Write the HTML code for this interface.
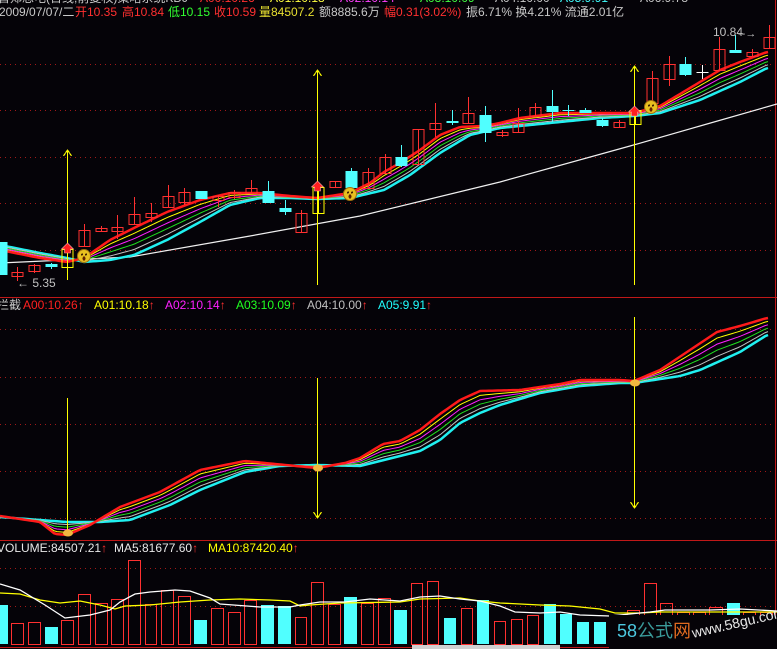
<!DOCTYPE html>
<html><head><meta charset="utf-8">
<style>
html,body{margin:0;padding:0;background:#050308;width:777px;height:649px;overflow:hidden}
#wrap{position:relative;width:777px;height:649px;font-family:"Liberation Sans","Noto Sans CJK SC",sans-serif}
.t{position:absolute;font-size:12px;white-space:nowrap;line-height:14px}
svg{position:absolute;left:0;top:0}
</style></head><body><div id="wrap">
<svg id="s" width="777" height="649" viewBox="0 0 777 649" shape-rendering="crispEdges"></svg>

<div class="t" style="left:-2px;top:-9px;color:#c8c8c8">首郑忠电(日线,前复权)策略系统KDJ</div>
<div class="t" style="left:200px;top:-9px;color:#ff3030">A00:10.26</div>
<div class="t" style="left:270px;top:-9px;color:#ffff40">A01:10.18</div>
<div class="t" style="left:340px;top:-9px;color:#ff40ff">A02:10.14</div>
<div class="t" style="left:420px;top:-9px;color:#40ff40">A03:10.09</div>
<div class="t" style="left:495px;top:-9px;color:#c8c8c8">A04:10.00</div>
<div class="t" style="left:560px;top:-9px;color:#40ffff">A05:9.91</div>
<div class="t" style="left:640px;top:-9px;color:#c8c8c8">A06:9.78</div>

<div class="t" style="left:-1px;top:5px;color:#c8c8c8">2009/07/07/二</div>
<div class="t" style="left:75px;top:5px;color:#ff3030">开10.35</div>
<div class="t" style="left:122px;top:5px;color:#ff3030">高10.84</div>
<div class="t" style="left:168px;top:5px;color:#30ff30">低10.15</div>
<div class="t" style="left:214px;top:5px;color:#ff3030">收10.59</div>
<div class="t" style="left:259px;top:5px;color:#e8e030">量84507.2</div>
<div class="t" style="left:319px;top:5px;color:#c8c8c8">额8885.6万</div>
<div class="t" style="left:384px;top:5px;color:#ff3030">幅0.31(3.02%)</div>
<div class="t" style="left:466px;top:5px;color:#c8c8c8">振6.71% 换4.21% 流通2.01亿</div>

<div class="t" style="left:713px;top:25px;color:#c0c0c0">10.84</div>
<div class="t" style="left:17px;top:276px;color:#c0c0c0">← 5.35</div>

<div class="t" style="left:-3px;top:298px;color:#c8c8c8">拦截</div>
<div class="t" style="left:23px;top:298px;color:#ff2020">A00:10.26<span style="color:#ff3030">↑</span></div>
<div class="t" style="left:94px;top:298px;color:#ffff00">A01:10.18<span style="color:#ff3030">↑</span></div>
<div class="t" style="left:165px;top:298px;color:#ff20ff">A02:10.14<span style="color:#ff3030">↑</span></div>
<div class="t" style="left:236px;top:298px;color:#20ff20">A03:10.09<span style="color:#ff3030">↑</span></div>
<div class="t" style="left:307px;top:298px;color:#c0c0c0">A04:10.00<span style="color:#ff3030">↑</span></div>
<div class="t" style="left:378px;top:298px;color:#20ffff">A05:9.91<span style="color:#ff3030">↑</span></div>

<div class="t" style="left:-3px;top:541px;color:#e8e8e8">VOLUME:84507.21<span style="color:#ff3030">↑</span></div>
<div class="t" style="left:114px;top:541px;color:#e8e8e8">MA5:81677.60<span style="color:#ff3030">↑</span></div>
<div class="t" style="left:208px;top:541px;color:#ffff00">MA10:87420.40<span style="color:#ff3030">↑</span></div>

<div style="position:absolute;left:609px;top:615px;width:168px;height:34px;background:#050308"></div>
<div class="t" style="left:617px;top:620px;font-size:18px;line-height:22px"><span style="color:#4cc8e0">58</span><span style="color:#3a9a9a">公式</span><span style="color:#e06a20">网</span></div>
<div class="t" style="left:692px;top:626px;font-size:14px;color:#e8e8e8;transform:rotate(-13deg);transform-origin:0 50%">www.58gu.com</div>
</div>
<script>
var s=document.getElementById('s');var h='';
function L(x1,y1,x2,y2,c,w,extra){h+='<line x1="'+x1+'" y1="'+y1+'" x2="'+x2+'" y2="'+y2+'" stroke="'+c+'" stroke-width="'+(w||1)+'" '+(extra||'')+'/>';}
function R(x,y,w,hh,c,fill){h+='<rect x="'+x+'" y="'+y+'" width="'+w+'" height="'+Math.max(hh,1)+'" '+(fill?'fill="'+c+'"':'fill="none" stroke="'+c+'"')+'/>';}
[64,110,157,203,250].forEach(function(y){L(0,y+.5,777,y+.5,'#a01818',1,'stroke-dasharray="1,4"');});
[329,377,424,471,518].forEach(function(y){L(0,y+.5,777,y+.5,'#a01818',1,'stroke-dasharray="1,4"');});
[568,606].forEach(function(y){L(0,y+.5,777,y+.5,'#a01818',1,'stroke-dasharray="1,4"');});
L(0,297.5,777,297.5,'#c01818');L(0,540.5,777,540.5,'#c01818');L(0,647.5,610,647.5,'#c01818');
L(775.5,0,775.5,649,'#c01818');
function P(pts,c,w){h+='<polyline fill="none" stroke="'+c+'" stroke-width="'+w+'" points="'+pts.map(function(p){return p.join(',')}).join(' ')+'" shape-rendering="auto"/>';}
P([[0,263],[130,257],[250,236],[360,216],[500,182],[630,146],[700,126],[777,104]],'#f0f0f0',1.2);
function f(pts,x){for(var i=0;i<pts.length-1;i++){if(x<=pts[i+1][0]){var a=pts[i],b=pts[i+1];return a[1]+(b[1]-a[1])*(x-a[0])/(b[0]-a[0]);}}return pts[pts.length-1][1];}
function bundle(top,bot,xmax){var cols=['#ff1a1a','#ffff00','#ff20ff','#20e020','#c0c0c0','#20f0f0'];var ws=[2.5,1,1,1,1,2.5];
for(var k=5;k>=0;k--){var pts=[];for(var x=0;x<=xmax;x+=3){var t=k/5;pts.push([x,f(top,x)*(1-t)+f(bot,x)*t]);}P(pts,cols[k],ws[k]);}}
var C=[[242,275,242,275,'c'],[272,276,267,281,'r'],[265,271,264,273,'r'],[264,267,263,269,'c'],[249,267,249,267,'y'],[230,246,224,246,'r'],[228,231,226,232,'r'],[227,231,215,239,'r'],[214,224,197,224,'r'],[213,217,203,222,'r'],[196,207,185,207,'r'],[192,202,188,205,'r'],[191,199,191,199,'c'],[196,200,195,207,'r'],[192,197,190,199,'r'],[188,193,180,193,'r'],[191,203,181,203,'c'],[208,212,200,215,'c'],[213,232,210,232,'r'],[187,213,187,213,'y'],[181,187,181,187,'r'],[171,188,168,188,'c'],[172,188,168,188,'r'],[157,173,154,173,'r'],[157,166,145,167,'c'],[129,164,129,164,'r'],[123,129,103,137,'r'],[121,123,110,125,'c'],[113,123,97,123,'r'],[115,133,106,142,'c'],[132,135,130,137,'r'],[123,132,108,132,'r'],[107,116,103,116,'r'],[106,112,90,122,'c'],[110,111,105,116,'c'],[110,113,108,113,'c'],[120,126,118,127,'c'],[122,127,120,128,'r'],[110,124,110,124,'y'],[78,103,71,103,'r'],[64,79,56,86,'r'],[64,75,57,76,'c'],[72,72,65,79,'w'],[49,70,37,70,'r'],[50,53,35,53,'c'],[52,56,49,57,'r'],[37,48,25,48,'r']];
bundle([[0,250],[40,258],[67,262],[84,258],[110,240],[134,228],[167,212],[200,200],[230,193],[260,193],[290,196],[317,198],[350,193],[370,183],[384,172],[400,163],[420,150],[440,135],[460,127],[484,126],[500,123],[520,118],[560,113],[600,113],[634,113],[660,106],[690,88],[720,70],[740,62],[767,52]],
[[0,245],[40,253],[67,258],[84,262],[110,260],[134,255],[167,240],[200,222],[230,205],[260,198],[290,198],[317,199],[350,198],[384,190],[410,175],[440,153],[470,135],[500,128],[540,124],[600,118],[634,116],[660,113],[700,100],[740,82],[767,68]],768);
C.forEach(function(c,i){var cx=Math.round(0.6+16.7*i)+.5;var col=c[4]=='r'?'#ff3030':c[4]=='c'?'#50ffff':c[4]=='y'?'#ffff00':'#ffffff';
L(cx,c[2],cx,c[3],col);if(c[4]=='c')R(cx-6,c[0],12,c[1]-c[0],col,1);else if(c[4]=='w')L(cx-6,c[0]+.5,cx+6,c[0]+.5,col);else R(cx-6+.5,c[0]+.5,11,c[1]-c[0],col,0);});
function arrowUp(x,y){h+='<polyline points="'+(x-4)+','+(y+6)+' '+x+','+y+' '+(x+4)+','+(y+6)+'" fill="none" stroke="#ffff00"/>';}
function arrowDn(x,y){h+='<polyline points="'+(x-4)+','+(y-6)+' '+x+','+y+' '+(x+4)+','+(y-6)+'" fill="none" stroke="#ffff00"/>';}
L(67.5,150,67.5,280,'#ffff00');arrowUp(67.5,150);
L(317.5,70,317.5,285,'#ffff00');arrowUp(317.5,70);
L(634.5,66,634.5,285,'#ffff00');arrowUp(634.5,66);
function redArrow(x,y){h+='<polygon points="'+x+','+y+' '+(x+6)+','+(y+6)+' '+(x+3)+','+(y+6)+' '+(x+3)+','+(y+10)+' '+(x-3)+','+(y+10)+' '+(x-3)+','+(y+6)+' '+(x-6)+','+(y+6)+'" fill="#ff2020" stroke="#ffaaaa" stroke-width=".6" shape-rendering="auto"/>';}
redArrow(67.5,243);redArrow(317.5,181);redArrow(634.5,106);
function smile(x,y){h+='<circle cx="'+x+'" cy="'+y+'" r="6.5" fill="#e8c020" stroke="#a07010" shape-rendering="auto"/><circle cx="'+(x-2)+'" cy="'+(y-1.5)+'" r="1" fill="#402000"/><circle cx="'+(x+2)+'" cy="'+(y-1.5)+'" r="1" fill="#402000"/><ellipse cx="'+x+'" cy="'+(y+2.5)+'" rx="1.5" ry="2" fill="#602000"/>';}
smile(84,256);smile(350,194);smile(651,107);
bundle([[0,516],[40,522],[55,534],[67,535],[90,525],[120,507],[160,492],[200,470],[245,461],[275,464],[317,468],[345,463],[360,458],[383,444],[400,441],[420,430],[440,414],[460,400],[480,391],[520,390],[560,384],[580,380],[620,380],[634,381],[660,370],[690,350],[717,332],[740,326],[767,318]],
[[0,517],[40,520],[67,522],[100,522],[130,520],[170,505],[200,490],[245,472],[280,466],[317,465],[360,466],[400,456],[420,451],[440,440],[460,423],[480,413],[500,405],[540,393],[580,386],[620,383],[634,383],[680,376],[700,370],[740,352],[767,335]],768);
L(67.5,398,67.5,535,'#ffff00');
L(317.5,378,317.5,518,'#ffff00');arrowDn(317.5,518);
L(634.5,317,634.5,508,'#ffff00');arrowDn(634.5,508);
[[67,531],[317,466],[634,381]].forEach(function(p){h+='<ellipse cx="'+(p[0]+1)+'" cy="'+(p[1]+2)+'" rx="5" ry="3.5" fill="#f0b840" shape-rendering="auto"/>';});
var V=[[0,8,605,'c'],[11,24,623,'r'],[28,41,622,'r'],[45,58,627,'c'],[61,74,620,'r'],[78,91,594,'r'],[95,108,603,'r'],[111,124,599,'r'],[128,141,560,'r'],[145,157,604,'r'],[161,174,590,'r'],[178,191,596,'r'],[194,207,620,'c'],[211,224,608,'r'],[228,241,612,'r'],[244,257,600,'r'],[261,274,605,'c'],[278,291,606,'c'],[295,307,617,'r'],[311,324,582,'r'],[328,341,604,'r'],[344,357,597,'c'],[361,374,603,'r'],[378,391,598,'r'],[394,407,610,'c'],[411,423,583,'r'],[427,439,581,'r'],[444,456,618,'c'],[461,473,608,'r'],[477,489,600,'c'],[494,506,621,'r'],[511,523,619,'r'],[527,539,615,'r'],[544,556,604,'c'],[560,572,614,'c'],[577,589,622,'c'],[594,606,622,'c'],[610,622,625,'r'],[627,640,610,'r'],[644,657,583,'r'],[660,673,603,'r'],[677,690,612,'r'],[693,706,612,'r'],[709,723,607,'r'],[727,740,603,'c'],[743,756,612,'r'],[760,773,612,'r']];
V.forEach(function(b){if(b[3]=='c')R(b[0],b[2],b[1]-b[0],644-b[2],'#50ffff',1);else R(b[0]+.5,b[2]+.5,b[1]-b[0]-1,644-b[2],'#ff3030',0);});
P([[0,593],[20,594],[40,600],[60,603],[80,601],[100,605],[115,609],[125,606],[150,605],[180,602],[210,600],[240,599],[270,600],[290,601],[300,606],[310,605],[340,603],[400,602],[420,599],[460,598],[480,601],[500,603],[540,605],[570,606],[600,609],[615,613],[640,613],[660,612],[777,612]],'#ffff00',1.3);
P([[0,584],[20,590],[45,605],[65,618],[90,615],[110,610],[120,602],[135,594],[150,592],[175,590],[190,591],[210,598],[220,604],[260,607],[290,607],[300,605],[320,602],[345,602],[370,599],[400,601],[420,597],[440,596],[460,599],[480,601],[500,606],[515,612],[540,613],[560,612],[580,615],[610,616],[650,612],[665,610],[710,610],[740,609],[777,611]],'#ffffff',1.3);
R(412,645,148,4,'#d0d0d0',1);
h+='<text x="738" y="37" fill="#c0c0c0" font-size="11" font-family="Liberation Sans">--→</text>';
s.innerHTML=h;
</script>
</body></html>
